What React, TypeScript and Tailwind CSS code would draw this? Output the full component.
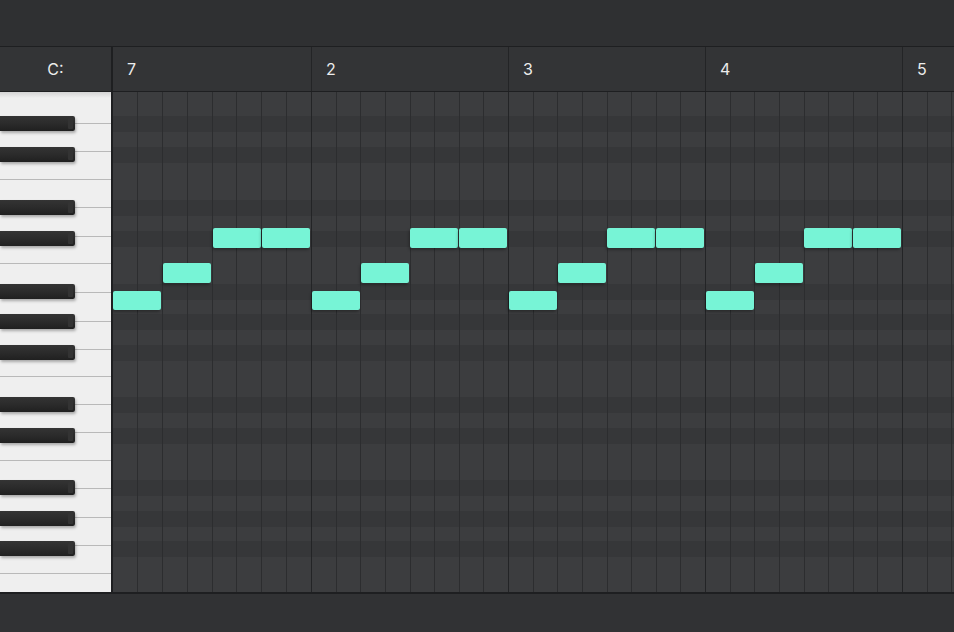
import React from "react"

// white key heights (px), top to bottom, each ends with its 1px line
const WHITE_KEYS = [32, 28, 28, 28, 29, 27, 29, 29, 28, 27, 28, 28, 28, 28, 29, 28, 28, 18]
// black key tops relative to the keyboard top
const BLACK_KEYS = [24, 55, 108, 139, 192, 222, 253, 305, 336, 388, 419, 449]

const GRID_H = 500
const BAR_W = [199, 197, 197, 197, 51]
const BAR_LABELS = ["7", "2", "3", "4", "5"]
const BAR_X = [0, 199, 396, 593]

// dark rows follow the black keys
function buildBands() {
  const bands: { h: number; dark: boolean }[] = []
  let y = 0
  for (const top of BLACK_KEYS) {
    if (top > y) bands.push({ h: top - y, dark: false })
    bands.push({ h: 16, dark: true })
    y = top + 16
  }
  if (y < GRID_H) bands.push({ h: GRID_H - y, dark: false })
  return bands
}

const NOTES = BAR_X.flatMap((x, b) => {
  const off = b === 0 ? [0, 50, 100, 149] : [0, 49, 98, 147]
  return [
    { x: x + off[0], y: 199, w: 48, h: 19 },
    { x: x + off[1], y: 171, w: 48, h: 20 },
    { x: x + off[2], y: 136, w: 48, h: 20 },
    { x: x + off[3], y: 136, w: 48, h: 20 },
  ]
})

function Keyboard() {
  return (
    <div className="relative w-[111px] h-full bg-[#efefef] overflow-hidden">
      <div className="flex flex-col">
        {WHITE_KEYS.map((h, i) => (
          <div
            key={i}
            className={i < WHITE_KEYS.length - 1 ? "border-b border-[#b9b9b9]" : ""}
            style={{ height: h }}
          />
        ))}
      </div>
      <div className="absolute inset-x-0 top-0 h-[6px] bg-gradient-to-b from-[#c8c8c8] to-transparent opacity-70" />
      {BLACK_KEYS.map((top) => (
        <div
          key={top}
          className="absolute left-0 w-[75px] h-[15px] rounded-r-[2px] bg-gradient-to-b from-[#343434] via-[#2b2b2b] to-[#202020] shadow-[1px_2px_3px_rgba(0,0,0,0.3)]"
          style={{ top }}
        >
          <div className="absolute right-[2px] top-[2px] bottom-[2px] w-[5px] rounded-[1px] bg-[#333333]" />
        </div>
      ))}
    </div>
  )
}

function Bar({ w, last }: { w: number; last: boolean }) {
  return (
    <div className={`h-full shrink-0 flex overflow-hidden ${last ? "" : "border-r border-[#232426]"}`} style={{ width: w }}>
      {Array.from({ length: 8 }).map((_, i) =>
        last ? (
          <div key={i} className="w-[24.5px] shrink-0 h-full border-r border-[#2c2d2f]" />
        ) : (
          <div key={i} className="flex-1 h-full border-r border-[#2c2d2f] last:border-r-0" />
        )
      )}
    </div>
  )
}

function Grid() {
  const bands = buildBands()
  return (
    <div className="relative flex-1 h-full overflow-hidden">
      <div className="flex flex-col">
        {bands.map((b, i) => (
          <div key={i} className={b.dark ? "bg-[#363739]" : "bg-[#3c3d3f]"} style={{ height: b.h }} />
        ))}
      </div>
      <div className="absolute inset-0 flex">
        {BAR_W.map((w, i) => (
          <Bar key={i} w={w} last={i === BAR_W.length - 1} />
        ))}
      </div>
      {NOTES.map((n, i) => (
        <div
          key={i}
          className="absolute rounded-[2px] bg-[#77f4d6] shadow-[-1px_2px_3px_rgba(0,0,0,0.3)]"
          style={{ left: n.x, top: n.y, width: n.w, height: n.h }}
        />
      ))}
    </div>
  )
}

export default function App() {
  return (
    <div className="w-[954px] h-[632px] flex flex-col bg-[#2f3032] overflow-hidden font-['Inter','Liberation_Sans',sans-serif]">
      <div className="h-[47px] shrink-0 bg-[#2f3032] border-b border-[#1e1f21]" />
      <div className="h-[45px] shrink-0 flex bg-[#333436] border-b border-[#1e1f21] text-[16px] text-[#ececec]">
        <div className="w-[111px] shrink-0 flex items-center justify-center">C:</div>
        <div className="w-[2px] shrink-0 bg-[#1e1f21]" />
        {BAR_LABELS.map((label, i) => (
          <div
            key={label}
            className={`shrink-0 flex items-center pl-[14px] ${i < BAR_LABELS.length - 1 ? "border-r border-[#232426]" : ""}`}
            style={{ width: BAR_W[i] }}
          >
            {label}
          </div>
        ))}
      </div>
      <div className="h-[500px] shrink-0 flex">
        <Keyboard />
        <div className="w-[2px] shrink-0 bg-[#1e1f21]" />
        <Grid />
      </div>
      <div className="flex-1 bg-[#313234] border-t-2 border-[#1e1f21]" />
    </div>
  )
}
